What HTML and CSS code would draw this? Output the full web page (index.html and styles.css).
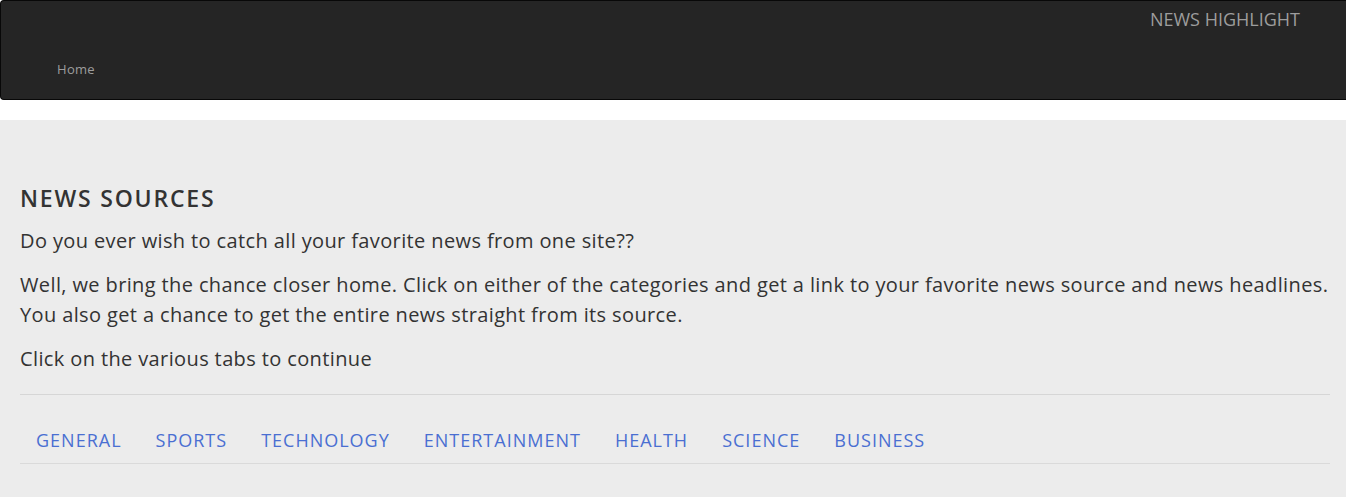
FILE: index.html
```html
<!DOCTYPE html>
<html lang="en">
<head>
<meta charset="utf-8">
<title>News Highlight</title>
<link rel="stylesheet" href="styles.css">
</head>
<body>
<nav class="navbar">
  <div class="brand-row"><a class="brand" href="#">NEWS HIGHLIGHT</a></div>
  <div class="menu-row"><a class="menu-link" href="#">Home</a></div>
</nav>
<section class="jumbotron">
  <h3 class="title">NEWS SOURCES</h3>
  <p class="lead">Do you ever wish to catch all your favorite news from one site??</p>
  <p class="lead">Well, we bring the chance closer home. Click on either of the categories and get a link to your favorite news source and news headlines. You also get a chance to get the entire news straight from its source.</p>
  <p class="lead">Click on the various tabs to continue</p>
  <hr class="rule">
  <ul class="tabs">
    <li><a href="#">GENERAL</a></li>
    <li><a href="#">SPORTS</a></li>
    <li><a href="#">TECHNOLOGY</a></li>
    <li><a href="#">ENTERTAINMENT</a></li>
    <li><a href="#">HEALTH</a></li>
    <li><a href="#">SCIENCE</a></li>
    <li><a href="#">BUSINESS</a></li>
  </ul>
</section>
</body>
</html>
```
FILE: styles.css
```css
html, body {
  margin: 0;
  padding: 0;
  background: #ffffff;
  overflow: hidden;
}
body {
  font-family: "Open Sans", "Liberation Sans", sans-serif;
  color: #333333;
}
a { text-decoration: none; }

.navbar {
  box-sizing: border-box;
  height: 100px;
  background: #252525;
  border: 1px solid #080808;
  border-right: 0;
  border-radius: 4px 0 0 4px;
  margin-bottom: 20px;
  display: flex;
  flex-direction: column;
}
.brand-row {
  display: flex;
  justify-content: flex-end;
  padding: 6px 46px 0 0;
  height: 26px;
}
.brand {
  color: #9d9d9d;
  font-size: 18px;
  line-height: 24px;
}
.menu-row {
  display: flex;
  padding: 26px 0 0 56px;
}
.menu-link {
  color: #9d9d9d;
  font-size: 13px;
  line-height: 20px;
  letter-spacing: 0.3px;
}

.jumbotron {
  background: #ececec;
  padding: 63px 16px 40px 20px;
  min-height: 400px;
}
.title {
  margin: 0 0 13px;
  font-size: 23px;
  line-height: 30px;
  font-weight: 600;
  letter-spacing: 1.8px;
  color: #333333;
}
.lead {
  margin: 0 -8px 14px 0;
  font-size: 20px;
  line-height: 30px;
  letter-spacing: 0.38px;
  color: #333333;
}
.rule {
  margin: 20px 0 0;
  border: 0;
  border-top: 1px solid #d6d6d6;
  height: 0;
}
.tabs {
  list-style: none;
  margin: 23px 0 0;
  padding: 0;
  display: flex;
  gap: 2px;
  border-bottom: 1px solid #dadada;
}
.tabs a {
  display: block;
  padding: 10px 16px;
  font-size: 18px;
  line-height: 25px;
  letter-spacing: 1px;
  color: #4a6fd2;
}
```
